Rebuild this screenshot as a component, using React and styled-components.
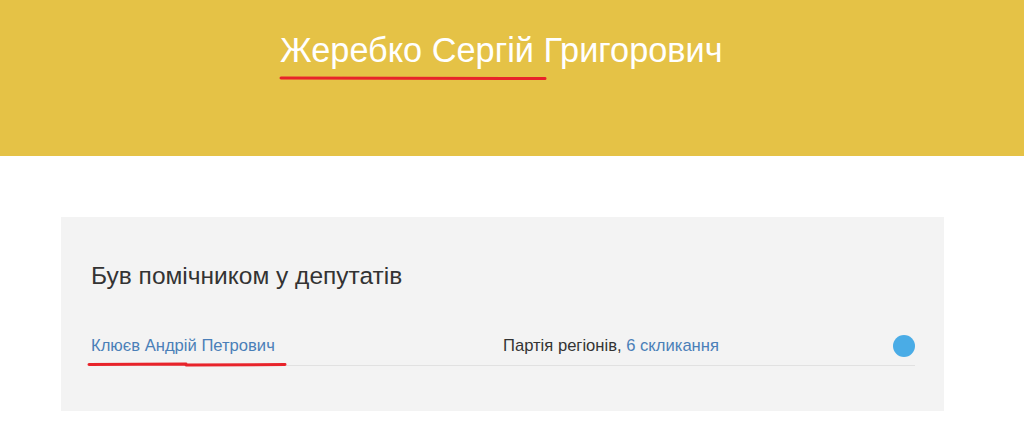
import React from "react";
import styled, { createGlobalStyle } from "styled-components";

const Global = createGlobalStyle`
  html, body { margin: 0; padding: 0; background: #fff; }
  body { font-family: "Liberation Sans", Arial, sans-serif; }
`;

const Header = styled.header`
  height: 156px;
  background: #e5c246;
  box-sizing: border-box;
  padding: 30px 0 0 280px;
`;

const Title = styled.h1`
  position: relative;
  display: inline-block;
  margin: 0;
  font-weight: 400;
  font-size: 34.3px;
  line-height: 40px;
  color: #fff;
`;

const Mark = styled.svg`
  position: absolute;
  pointer-events: none;
  overflow: visible;
`;

const Main = styled.main`
  padding: 61px 80px 0 61px;
`;

const Panel = styled.section`
  width: 883px;
  height: 194px;
  box-sizing: border-box;
  background: #f3f3f3;
  padding: 44px 29px 0 30px;
`;

const Heading = styled.h2`
  margin: 0 0 36px;
  font-weight: 400;
  font-size: 24.5px;
  line-height: 30px;
  color: #333;
`;

const Row = styled.div`
  position: relative;
  display: grid;
  grid-template-columns: 412px 1fr auto;
  align-items: center;
  height: 38px;
  border-bottom: 1px solid #e1e1e1;
  font-size: 16.6px;
  color: #333;
`;

const Link = styled.a`
  color: #4a7fb8;
  text-decoration: none;
`;

const Dot = styled.span`
  width: 22px;
  height: 22px;
  border-radius: 50%;
  background: #4aace6;
`;

export default function App() {
  return (
    <>
      <Global />
      <Header>
        <Title>
          Жеребко Сергій Григорович
          <Mark style={{ left: 0, top: 45 }} width="266" height="6">
            <path d="M1 3 L265 3.5" stroke="#e8232a" strokeWidth="3" strokeLinecap="round" />
          </Mark>
        </Title>
      </Header>
      <Main>
        <Panel>
          <Heading>Був помічником у депутатів</Heading>
          <Row>
            <Link href="#">Клюєв Андрій Петрович</Link>
            <span>
              Партія регіонів, <Link href="#">6 скликання</Link>
            </span>
            <Dot />
            <Mark style={{ left: -3, top: 35 }} width="200" height="6">
              <path d="M1 2.5 L98 2 M98 3 L197 2.5" stroke="#e8232a" strokeWidth="3" strokeLinecap="round" />
            </Mark>
          </Row>
        </Panel>
      </Main>
    </>
  );
}
